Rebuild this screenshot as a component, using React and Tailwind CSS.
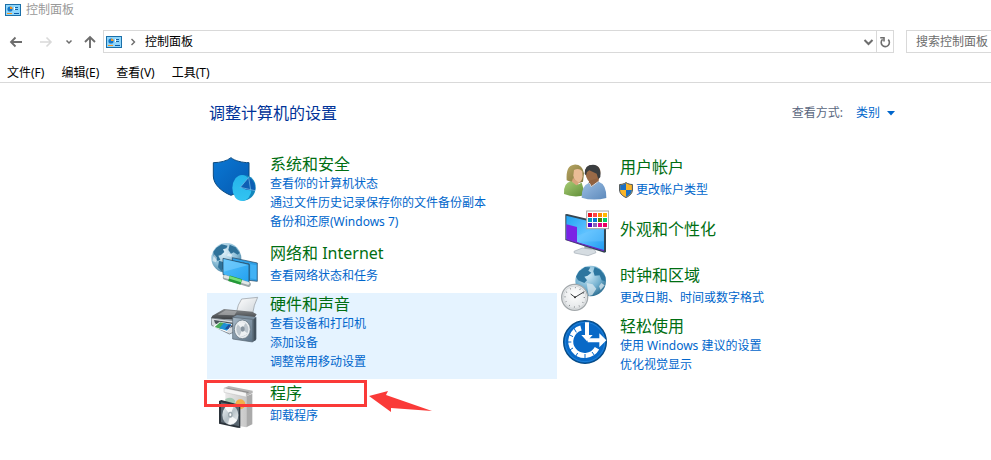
import React, { useState } from 'react';

const PanelIcon = () => (
  <svg width="16" height="12" viewBox="0 0 16 12" className="shrink-0">
    <rect x="0.5" y="0.5" width="15" height="11" fill="#8fd6fb" stroke="#1b6fa8" />
    <circle cx="5" cy="5" r="2.6" fill="#1577c8" />
    <path d="M5 5V2.4A2.6 2.6 0 0 1 7.6 5Z" fill="#f7931e" />
    <path d="M10 3.5h3M10 5.5h3" stroke="#1464a5" />
    <path d="M9.5 3v3" stroke="#fff" />
    <path d="M2 9.5h5" stroke="#f7931e" />
    <path d="M9 9.5h5" stroke="#0c5aa6" />
  </svg>
);

const ShieldPieIcon = () => (
  <svg width="48" height="48" viewBox="18 15 144 144">
    <defs>
      <linearGradient id="shield" x1="0" y1="0" x2="1" y2="1">
        <stop offset="0" stopColor="#0a78d4" />
        <stop offset="1" stopColor="#0559b0" />
      </linearGradient>
      <linearGradient id="disc" x1="0" y1="0" x2="0" y2="1">
        <stop offset="0" stopColor="#25b4ea" />
        <stop offset="1" stopColor="#33c4f2" />
      </linearGradient>
    </defs>
    <path d="M78 23C90 33 112 38 132 38V78C132 104 104 126 78 136C52 126 25 104 25 78V38C46 38 66 33 78 23Z" fill="url(#shield)" stroke="#0b4a80" strokeWidth="3" />
    <path d="M112 76C134 72 152 88 152 112C152 136 134 152 112 153Z" fill="#1287bd" />
    <ellipse cx="111" cy="114" rx="29" ry="39" fill="url(#disc)" />
    <path d="M131 82L106 112L124 119L150 122C153 104 144 90 131 82Z" fill="#0d5fb4" />
    <path d="M131 82L106 112L150 122M131 82L137 120" fill="none" stroke="#7fc4ea" strokeWidth="2" />
  </svg>
);

const NetworkIcon = () => (
  <svg width="48" height="48" viewBox="18 21 144 144">
    <defs>
      <radialGradient id="globeA" cx="0.4" cy="0.3" r="0.75">
        <stop offset="0" stopColor="#e3f3fa" />
        <stop offset="0.6" stopColor="#8dbfd8" />
        <stop offset="1" stopColor="#3f7c9d" />
      </radialGradient>
      <linearGradient id="screenA" x1="0" y1="0" x2="1" y2="1">
        <stop offset="0" stopColor="#55c0fb" />
        <stop offset="1" stopColor="#22a0f0" />
      </linearGradient>
    </defs>
    <circle cx="64" cy="69" r="45" fill="url(#globeA)" />
    <path d="M34 38L50 28L68 32L64 40L54 43L58 51L48 60L40 62L46 74L38 78L26 64L25 50ZM74 29L92 37L104 54L98 59L86 52L78 56L70 45ZM42 77L56 82L58 94L50 109L39 97Z" fill="#2f7299" />
    <path d="M28 58L36 68L33 82L22 78ZM70 55L82 59L78 66L66 62Z" fill="#fff" opacity="0.5" />
    <path d="M82 68L157 84V139L132 136V87L82 78Z" fill="#2f9fe4" stroke="#1d3d59" strokeWidth="2" />
    <path d="M136 87L154 91V133L136 130Z" fill="#42b2f5" />
    <path d="M54 70L132 88V145L54 119Z" fill="url(#screenA)" stroke="#263d50" strokeWidth="2" />
    <path d="M56 73L130 90L56 110Z" fill="#8bd6ff" opacity="0.45" />
    <path d="M61 127L130 148" stroke="#9aa5a7" strokeWidth="15" strokeLinecap="round" />
    <path d="M60 125L129 145" stroke="#e1e7e6" strokeWidth="9" strokeLinecap="round" />
    <path d="M72 130L109 141" stroke="#249a37" strokeWidth="17" />
    <path d="M73 127L109 138" stroke="#76df79" strokeWidth="8" />
  </svg>
);

const PrinterIcon = () => (
  <svg width="48" height="48" viewBox="18 15 144 144">
    <defs>
      <linearGradient id="paper" x1="0" y1="0" x2="1" y2="1">
        <stop offset="0" stopColor="#ffffff" />
        <stop offset="1" stopColor="#cdd3d8" />
      </linearGradient>
      <linearGradient id="printerTop" x1="0" y1="0" x2="0" y2="1">
        <stop offset="0" stopColor="#86898c" />
        <stop offset="1" stopColor="#303438" />
      </linearGradient>
      <linearGradient id="speaker" x1="0" y1="0" x2="1" y2="1">
        <stop offset="0" stopColor="#a9bac8" />
        <stop offset="1" stopColor="#5c7184" />
      </linearGradient>
    </defs>
    <path d="M110 27L158 22Q146 45 143 71L94 68Q98 43 110 27Z" fill="url(#paper)" stroke="#8f969b" strokeWidth="2" />
    <path d="M57 57L142 65L155 73L142 93L18 85L22 77Z" fill="url(#printerTop)" />
    <path d="M62 61L96 64L88 76L38 74Z" fill="#b4b6b7" opacity="0.65" />
    <path d="M18 84L88 92V126L73 132L20 106Z" fill="#d7dce1" stroke="#596068" strokeWidth="2" />
    <path d="M27 90L84 98V110L65 116L30 100Z" fill="#4a535a" />
    <path d="M44 95L82 102L66 126L24 111Z" fill="#fff" />
    <path d="M45 97L62 100L50 118L29 111Z" fill="#49ab58" />
    <path d="M56 99L79 103L66 122L43 115Z" fill="#1f8fd6" />
    <path d="M70 104L79 105L70 118L60 116Z" fill="#224f9a" />
    <path d="M83 82L96 75L153 81V151L143 155Z" fill="#7c8f9f" />
    <path d="M83 82L143 88V156L83 147Z" fill="url(#speaker)" stroke="#53616c" strokeWidth="2" />
    <path d="M145 88L154 81V148L145 155Z" fill="#43515d" />
    <ellipse cx="112" cy="118" rx="24" ry="28" fill="#e9edf0" stroke="#5e6c77" strokeWidth="2" />
    <ellipse cx="112" cy="118" rx="18" ry="22" fill="#bdc6cd" />
    <path d="M112 118L98 103Q107 91 121 99ZM112 118L127 130Q118 143 104 137Z" fill="#fff" opacity="0.75" />
    <ellipse cx="113" cy="117" rx="6" ry="8" fill="#87949f" />
  </svg>
);

const ProgramsIcon = () => (
  <svg width="48" height="48" viewBox="33 21 144 144">
    <defs>
      <linearGradient id="box" x1="0" y1="0" x2="1" y2="0">
        <stop offset="0" stopColor="#e9e9e9" />
        <stop offset="1" stopColor="#c8c8c8" />
      </linearGradient>
      <linearGradient id="cd" x1="0" y1="0" x2="1" y2="1">
        <stop offset="0" stopColor="#eef3f5" />
        <stop offset="0.5" stopColor="#b6c0c6" />
        <stop offset="1" stopColor="#f7f9fa" />
      </linearGradient>
    </defs>
    <path d="M72 39L86 33L158 47V54L139 64L72 50Z" fill="#b5b5b5" />
    <path d="M82 39L148 51L138 57L74 44Z" fill="#8b8b8b" />
    <path d="M76 52L139 63V157L76 146Z" fill="url(#box)" />
    <path d="M139 64L157 56V148L139 157Z" fill="#aaa" />
    <path d="M72 39L139 53V66L72 52Z" fill="#f5f5f5" stroke="#aaa" strokeWidth="1" />
    <path d="M76 72Q98 62 106 79L100 90L76 86Z" fill="#a6c9b4" />
    <circle cx="121" cy="88" r="15" fill="#f2ae49" />
    <path d="M57 78L64 75L121 90V159L112 158L57 146Z" fill="#2b333a" />
    <path d="M63 82L117 94V154L63 142Z" fill="#59656f" />
    <ellipse cx="91" cy="120" rx="24" ry="30" fill="url(#cd)" />
    <path d="M91 120L74 98Q88 84 101 94ZM91 120L111 136Q98 151 84 147Z" fill="#fff" opacity="0.8" />
    <ellipse cx="91" cy="119" rx="7" ry="9" fill="#9ba6ad" />
    <ellipse cx="91" cy="119" rx="3" ry="4" fill="#fff" />
  </svg>
);

const UsersIcon = () => (
  <svg width="48" height="48" viewBox="18 3 144 144">
    <defs>
      <linearGradient id="green" x1="0" y1="0" x2="1" y2="1">
        <stop offset="0" stopColor="#a9cd76" />
        <stop offset="1" stopColor="#5d8b35" />
      </linearGradient>
      <linearGradient id="blue" x1="0" y1="0" x2="1" y2="1">
        <stop offset="0" stopColor="#9dbfe4" />
        <stop offset="1" stopColor="#5c89bb" />
      </linearGradient>
      <linearGradient id="blond" x1="0" y1="0" x2="1" y2="1">
        <stop offset="0" stopColor="#b7a764" />
        <stop offset="1" stopColor="#7e7139" />
      </linearGradient>
    </defs>
    <path d="M35 76Q32 31 57 29Q82 27 87 55L84 80Q62 90 35 76Z" fill="url(#blond)" />
    <path d="M57 45Q72 38 82 49L83 64Q81 81 69 84Q57 78 55 61Z" fill="#e9bc96" />
    <path d="M54 69L72 83L66 94L50 82Z" fill="#d8a47b" />
    <path d="M27 117Q25 83 49 79L64 91L80 83L91 120Q58 130 27 117Z" fill="url(#green)" />
    <path d="M91 54Q90 30 114 30Q138 31 136 55Q134 82 114 88Q95 81 91 54Z" fill="#9a6a47" />
    <path d="M89 57Q88 29 114 29Q140 31 136 66L130 73L125 56L103 46L96 51L93 61Z" fill="#3b3e40" />
    <path d="M103 77L130 69L132 84L111 100L100 87Z" fill="#91613f" />
    <path d="M80 128Q79 93 101 84L109 97L131 80Q155 88 154 129Q114 139 80 128Z" fill="url(#blue)" />
    <path d="M103 84L109 95L131 79" fill="none" stroke="#d2e2f3" strokeWidth="3" />
  </svg>
);

const MonitorIcon = () => (
  <svg width="48" height="48" viewBox="18 15 144 144">
    <defs>
      <linearGradient id="screenB" x1="0" y1="0" x2="1" y2="1">
        <stop offset="0" stopColor="#21a3f3" />
        <stop offset="0.5" stopColor="#5fc2ff" />
        <stop offset="1" stopColor="#209af1" />
      </linearGradient>
    </defs>
    <path d="M88 112L110 116V134L88 132Z" fill="#a0a9b1" />
    <path d="M57 139L82 129L119 134L123 143L99 152L58 144Z" fill="#d5dce1" stroke="#a5aeb6" strokeWidth="2" />
    <path d="M31 28L36 27L153 55V141L148 143L31 105Z" fill="#344551" />
    <path d="M34 32L147 59V138L34 102Z" fill="url(#screenB)" />
    <path d="M34 58L66 66V112L34 102Z" fill="#7b22e4" />
    <path d="M34 102L147 135V139L34 105Z" fill="#6c20c2" />
    <path d="M66 92L146 62V109L66 110Z" fill="#79ccff" opacity="0.35" />
    <rect x="95" y="18" width="66" height="53" fill="#fff" stroke="#a4a4a4" strokeWidth="3" />
    <g>
      <rect x="99" y="24" width="12" height="12" fill="#e81123" />
      <rect x="114" y="24" width="12" height="12" fill="#ff4343" />
      <rect x="129" y="24" width="12" height="12" fill="#ff8c00" />
      <rect x="144" y="24" width="12" height="12" fill="#ffb900" />
      <rect x="99" y="39" width="12" height="12" fill="#0099bc" />
      <rect x="114" y="39" width="12" height="12" fill="#0078d7" />
      <rect x="129" y="39" width="12" height="12" fill="#498205" />
      <rect x="144" y="39" width="12" height="12" fill="#00cc6a" />
      <rect x="99" y="54" width="12" height="12" fill="#4b00c8" />
      <rect x="114" y="54" width="12" height="12" fill="#8764b8" />
      <rect x="129" y="54" width="12" height="12" fill="#e3008c" />
      <rect x="144" y="54" width="12" height="12" fill="#ea005e" />
    </g>
  </svg>
);

const ClockIcon = () => (
  <svg width="48" height="48" viewBox="18 9 144 144">
    <defs>
      <radialGradient id="globeB" cx="0.4" cy="0.3" r="0.75">
        <stop offset="0" stopColor="#d6edf8" />
        <stop offset="0.6" stopColor="#72b0cf" />
        <stop offset="1" stopColor="#28688c" />
      </radialGradient>
      <radialGradient id="face" cx="0.5" cy="0.4" r="0.6">
        <stop offset="0" stopColor="#ffffff" />
        <stop offset="1" stopColor="#e1e4e6" />
      </radialGradient>
    </defs>
    <circle cx="107" cy="60" r="46" fill="url(#globeB)" />
    <path d="M72 31L90 18L106 19L100 29L109 35L98 44L88 47L96 58L88 66L69 58L63 47ZM119 18L136 26L151 47L151 61L140 58L134 43L119 44L115 31Z" fill="#2d769f" />
    <path d="M95 66L113 70L124 83L112 102L101 105L98 87ZM139 66L149 73L137 87L132 76Z" fill="#dceaf0" opacity="0.75" />
    <circle cx="59" cy="109" r="39" fill="url(#face)" stroke="#a3a8ab" strokeWidth="4" />
    <circle cx="59" cy="109" r="34" fill="none" stroke="#c8cccf" strokeWidth="2" />
    <circle cx="59" cy="109" r="29" fill="none" stroke="#6d7275" strokeWidth="4" strokeDasharray="2 13.18" />
    <path d="M47 99L60 109L88 92" fill="none" stroke="#3d4144" strokeWidth="3" />
    <circle cx="60" cy="109" r="3" fill="#333" />
  </svg>
);

const EaseIcon = () => (
  <svg width="48" height="48" viewBox="18 168 144 144">
    <circle cx="90" cy="243" r="64" fill="#0869c7" stroke="#064b86" strokeWidth="4" />
    <circle cx="90" cy="243" r="59" fill="none" stroke="#2c8ce0" strokeWidth="2" />
    <path d="M78 201A42 42 0 1 0 126 262" fill="none" stroke="#fff" strokeWidth="15" />
    <path d="M64 214L54 197M54 227L37 218M49 243H32M54 261L39 270M68 276L59 291M90 279V296M111 273L123 290" stroke="#0869c7" strokeWidth="3" />
    <path d="M90 184H102V222H113L96 241L79 222H90Z" fill="#fff" />
    <path d="M98 232H133V217L154 238L133 259V244H98Z" fill="#fff" />
  </svg>
);

const UacShield = () => (
  <svg width="14" height="16" viewBox="0 0 14 16" className="shrink-0">
    <path d="M7 0.6C9 2 11.3 2.5 13.4 2.5V8C13.4 11.8 10 14.3 7 15.5C4 14.3 0.6 11.8 0.6 8V2.5C2.7 2.5 5 2 7 0.6Z" fill="#f9b52b" stroke="#46525c" />
    <path d="M7 1.2V8H1.2V3C3.2 3 5.2 2.4 7 1.2Z" fill="#1b6fc4" />
    <path d="M7 8H12.8C12.8 11.4 9.8 13.8 7 14.8Z" fill="#1b6fc4" />
  </svg>
);

const leftGroups = [
  { title: '系统和安全', Icon: ShieldPieIcon, links: ['查看你的计算机状态', '通过文件历史记录保存你的文件备份副本', '备份和还原(Windows 7)'] },
  { title: '网络和 Internet', Icon: NetworkIcon, links: ['查看网络状态和任务'] },
  { title: '硬件和声音', Icon: PrinterIcon, links: ['查看设备和打印机', '添加设备', '调整常用移动设置'], active: true },
  { title: '程序', Icon: ProgramsIcon, links: ['卸载程序'], marked: true },
];

const rightGroups = [
  { title: '用户帐户', Icon: UsersIcon, links: ['更改帐户类型'], shield: true },
  { title: '外观和个性化', Icon: MonitorIcon, links: [] },
  { title: '时钟和区域', Icon: ClockIcon, links: ['更改日期、时间或数字格式'] },
  { title: '轻松使用', Icon: EaseIcon, links: ['使用 Windows 建议的设置', '优化视觉显示'] },
];

const Marker = () => (
  <div className="absolute -left-[3px] -top-[2px] h-[27px] w-[163px] border-3 border-[#fa3a38] pointer-events-none">
    <svg width="64" height="22" viewBox="0 0 64 22" className="absolute left-[162px] top-[8px]">
      <path d="M0 5L19 0L17 4L63 20L22 17L22 21Z" fill="#fa3a38" />
    </svg>
  </div>
);

const Group = ({ title, Icon, links, active, marked, shield }) => {
  const many = links.length > 1;
  const none = links.length === 0;

  return (
    <section className={`relative flex gap-[11px] pl-1 ${active ? 'bg-[#e5f3ff]' : ''} ${none ? 'pb-[3px]' : ''}`}>
      <div className={`shrink-0 ${many ? 'pt-0.5' : ''} ${none ? 'pt-[3px]' : ''}`}>
        <Icon />
      </div>
      <div className={many ? 'pt-px pb-2' : none ? 'pt-3' : 'pt-px'}>
        <h2 className={`text-base leading-5 ${many ? '' : 'mb-[3px]'}`}>
          <a href="#" className="text-[#006e12] hover:underline">{title}</a>
        </h2>
        <ul className="text-xs leading-[19px]">
          {links.map((link) => (
            <li key={link}>
              <a href="#" className={`text-[#0066cc] hover:underline ${shield ? '-ml-px flex items-center gap-[3px]' : ''}`}>
                {shield && <UacShield />}
                {link}
              </a>
            </li>
          ))}
        </ul>
      </div>
      {marked && <Marker />}
    </section>
  );
};

const App = () => {
  const [query, setQuery] = useState('');
  const [view, setView] = useState('类别');

  return (
    <div className="min-h-screen bg-white font-['Noto_Sans','Noto_Sans_CJK_SC',sans-serif] text-xs text-black">
      {/* Title bar */}
      <header className="flex h-5 items-center gap-[5px] pl-[5px] text-[#999]">
        <PanelIcon />
        <span>控制面板</span>
      </header>

      {/* Navigation */}
      <nav className="flex h-[43px] items-center">
        <div className="flex w-[103px] shrink-0 items-center pl-[9px] text-[#6d6d6d]">
          <button aria-label="后退">
            <svg width="14" height="12" viewBox="0 0 14 12" fill="none" stroke="currentColor" strokeWidth="1.8"><path d="M13 6H2M6.5 1.5L2 6L6.5 10.5" /></svg>
          </button>
          <button aria-label="前进" className="ml-4 text-[#d9d9d9]">
            <svg width="14" height="12" viewBox="0 0 14 12" fill="none" stroke="currentColor" strokeWidth="1.6"><path d="M1 6H12M7.5 1.5L12 6L7.5 10.5" /></svg>
          </button>
          <button aria-label="最近位置" className="ml-3">
            <svg width="8" height="8" viewBox="0 0 8 8" fill="none" stroke="currentColor" strokeWidth="1.5"><path d="M1.5 2.5L4 5L6.5 2.5" /></svg>
          </button>
          <button aria-label="上移" className="ml-2.5">
            <svg width="14" height="14" viewBox="0 0 14 14" fill="none" stroke="currentColor" strokeWidth="1.9"><path d="M7 13V2M2 7L7 2L12 7" /></svg>
          </button>
        </div>
        <div className="flex h-[23px] flex-1 items-center border border-[#d9d9d9] pl-0.5">
          <PanelIcon />
          <svg width="6" height="8" viewBox="0 0 6 8" fill="none" stroke="#6d6d6d" strokeWidth="1.4" className="ml-2"><path d="M1.5 1L4.5 4L1.5 7" /></svg>
          <button className="ml-[9px]">控制面板</button>
          <button aria-label="历史记录" className="ml-auto mr-0.5">
            <svg width="11" height="8" viewBox="0 0 11 8" fill="none" stroke="#6d6d6d" strokeWidth="2"><path d="M1.5 2L5.5 6L9.5 2" /></svg>
          </button>
          <button aria-label="刷新" className="flex h-full w-[17px] items-center justify-center border-l border-[#d9d9d9]">
            <svg width="12" height="12" viewBox="0 0 12 12" fill="none" stroke="#6d6d6d" strokeWidth="1.6"><path d="M9.2 3.6A4.1 4.1 0 1 1 3.6 3.4M1.2 1.8H5V5.6" /></svg>
          </button>
        </div>
        <input
          aria-label="搜索控制面板"
          placeholder="搜索控制面板"
          value={query}
          onChange={(e) => setQuery(e.target.value)}
          className="ml-3 h-[23px] w-[85px] shrink-0 border border-r-0 border-[#d9d9d9] pl-[9px] outline-none placeholder:text-[#6d6d6d]"
        />
      </nav>

      {/* Menu bar */}
      <div className="flex h-5 items-center gap-[17px] border-b border-[#d9d9d9] pl-[7px]">
        <button>文件(F)</button>
        <button>编辑(E)</button>
        <button>查看(V)</button>
        <button>工具(T)</button>
      </div>

      <main className="pl-[207px] pr-[84px] pt-5">
        <div className="flex h-5 items-center justify-between pl-0.5 pr-3">
          <h1 className="text-base leading-5 text-[#003399]">调整计算机的设置</h1>
          <div className="flex items-center">
            <label htmlFor="view" className="text-[#5a6780]">查看方式:</label>
            <div className="ml-[13px] flex items-center text-[#0066cc]">
              <select id="view" value={view} onChange={(e) => setView(e.target.value)} className="w-[31px] appearance-none bg-transparent outline-none">
                <option>类别</option>
              </select>
              <svg width="8" height="5" viewBox="0 0 8 5"><path d="M0 0H8L4 4.5Z" fill="currentColor" /></svg>
            </div>
          </div>
        </div>

        <div className="mt-[30px] grid grid-cols-2">
          <div className="flex flex-col gap-[3px]">
            {leftGroups.map((group) => (
              <Group key={group.title} {...group} />
            ))}
          </div>
          <div className="flex flex-col gap-[3px] pt-[3px]">
            {rightGroups.map((group) => (
              <Group key={group.title} {...group} />
            ))}
          </div>
        </div>
      </main>
    </div>
  );
};

export default App;
